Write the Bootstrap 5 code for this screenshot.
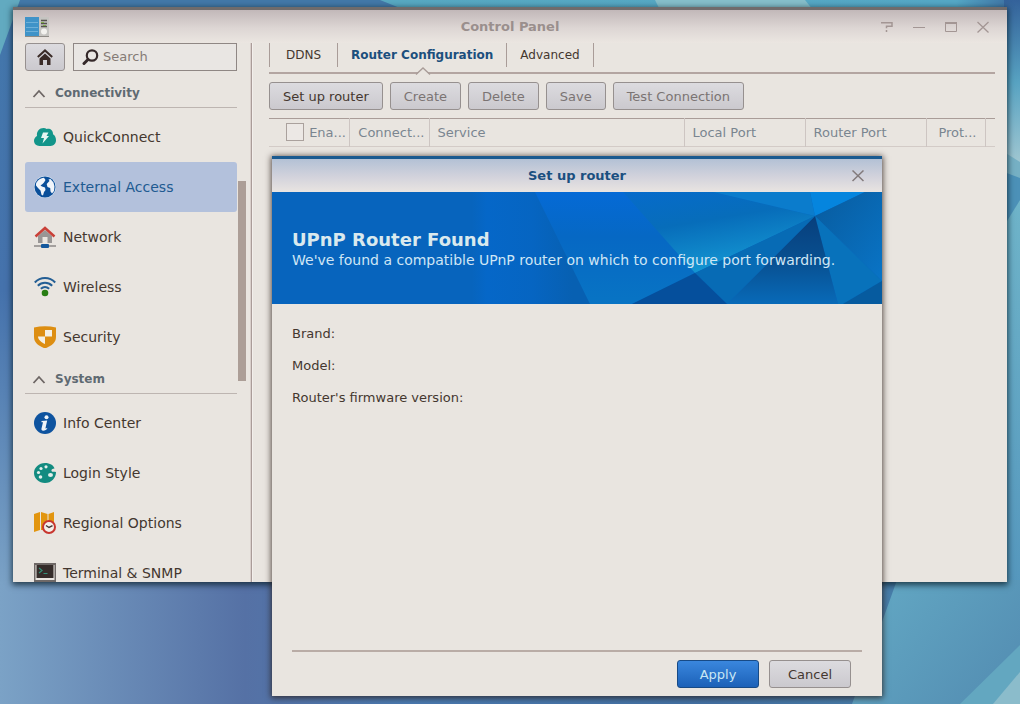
<!DOCTYPE html>
<html lang="en">
<head>
<meta charset="utf-8">
<meta name="viewport" content="width=device-width, initial-scale=1">
<title>Control Panel</title>
<link href="https://cdn.jsdelivr.net/npm/bootstrap@5.3.0/dist/css/bootstrap.min.css" rel="stylesheet">
<style>
  :root { --line: #a99c98; --ink: #44372f; --panel: #e9e5e0; }
  body { font-family: "DejaVu Sans", sans-serif; font-size: 13px; line-height: 20px; color: var(--ink); }
  .desktop { min-height: 100vh; background: #5583b3; }
  .wallpaper, .banner-art { inset: 0; width: 100%; height: 100%; }
  .win { background: var(--panel); box-shadow: 0 2px 6px 1px rgba(10, 30, 40, .75); }
  .main-win { height: calc(100vh - 129px); margin: 7px 13px 0; border-top: 3px solid #706b6b; }
  .main-title { height: 34px; padding: 0 12px; background: linear-gradient(#c2b8b9, #ddd6d4 55%, #ebe6e1); }
  .title-text { padding-left: 92px; color: #9a8f8d; font-weight: 700; }
  .win-tool { width: 16px; height: 16px; padding: 0; border: 0; background: none; display: flex; color: #a39694; }
  .win-tool svg { margin: auto; }
  .side { width: 225px; flex: none; margin-left: 12px; }
  .side-inner { width: 212px; }
  .side-tools { margin-bottom: 5px; }
  .divider { width: 3px; flex: none; border-left: 1px solid #d9cfcb; background: #aa9c99; border-right: 1px solid #f3efec; }
  .sys-btn { height: 28px; padding: 1px 13px 0; border: 1px solid #96908f; border-radius: 3px; background: linear-gradient(#dcdbdf, #cbc9ce); color: var(--ink); font-size: 13px; line-height: 20px; }
  .sys-btn:disabled { color: #7b7473; }
  .home-btn { width: 40px; padding: 0; flex: none; }
  .toolbar { gap: 7px; }
  .search-box { height: 28px; border: 1px solid #8f8784; background: #e9e6e3; }
  .search-box input { background: none; border: 0; outline: 0; min-width: 0; color: #6f6764; }
  .search-box input::placeholder { color: #857b76; opacity: 1; }
  .group-btn { width: 100%; height: 32px; padding: 3px 0 0 7px; border: 0; border-bottom: 1px solid #bdb5b1; background: none; color: #5f6a72; font-size: 12px; font-weight: 700; text-align: left; margin-bottom: 4px; }
  .side-link { height: 50px; padding-left: 9px; gap: 7px; border-radius: 3px; color: var(--ink); font-size: 14px; text-decoration: none; }
  .side-link svg { flex: none; }
  .side-link.active { background: #b3c1dc; color: #205a91; }
  .thumb { left: 225px; top: 138px; width: 8px; height: 200px; background: #ac9e97; }
  .content { padding: 0 12px 0 16px; min-width: 0; }
  .tab-row { height: 31px; border-bottom: 2px solid #b3a5a1; }
  .tab-row a { height: 24px; padding: 0 16px; border-right: 1px solid var(--line); color: var(--ink); font-size: 12px; line-height: 24px; text-decoration: none; }
  .tab-row li:first-child a { border-left: 1px solid var(--line); }
  .tab-row a.active { color: #1b4f7d; font-weight: 700; }
  .tab-row a.active, .tab-row li:last-child a { padding: 0 13px; }
  .tab-caret { left: 50%; top: 23px; margin-left: -8px; }
  .port-table { width: 100%; table-layout: fixed; border-top: 1px solid var(--line); border-bottom: 1px solid #d3cbc7; color: #7a8590; }
  .port-table th { height: 27px; padding: 1px 8px 0; font-weight: 400; border-right: 1px solid #cdc5c2; white-space: nowrap; overflow: hidden; line-height: 26px; }
  .port-table th.spare { border: 0; padding: 0; }
  .tick { appearance: none; width: 18px; height: 18px; border: 1px solid #aaa19d; background: #ece8e5; margin: 0 1px 0 9px; vertical-align: -4px; }
  .dialog-win { left: 272px; right: 138px; top: 156px; bottom: 8px; border-top: 3px solid #1a5a90; box-shadow: 0 1px 6px 1px rgba(40, 25, 20, .75); }
  .dialog-title { height: 33px; background: linear-gradient(#b3c1d5, #d3d3dc 55%, #e9e4e1); color: #1b4f80; font-weight: 700; }
  .dialog-close { right: 16px; color: #827a7b; }
  .banner { height: 112px; padding: 0 20px; background: #0764bd; color: #cfe6f5; }
  .banner h1 { font-size: 18px; line-height: 20px; font-weight: 700; margin: 38px 0 0; color: #d9e9ee; }
  .banner p { font-size: 14px; line-height: 20px; margin: 0; white-space: nowrap; }
  .field-list { padding: 20px; gap: 12px; }
  .dialog-foot { margin: 0 20px; height: 46px; padding: 8px 11px 0; gap: 10px; border-top: 2px solid #b9aca6; }
  .foot-btn { width: 82px; }
  .sys-btn.apply { color: #c9e6f3; background: linear-gradient(#3a87de, #1c61b8); border-color: #174a86; }
</style>
</head>
<body>
<div class="desktop position-relative overflow-hidden">
  <svg class="wallpaper position-absolute" viewBox="0 0 1020 704" preserveAspectRatio="none" aria-hidden="true">
    <defs>
      <linearGradient id="wa" x1="0" y1="0" x2="1" y2="0"><stop offset="0" stop-color="#7ba2c6"/><stop offset=".24" stop-color="#5571a5"/><stop offset=".4" stop-color="#4a7ab0"/><stop offset=".7" stop-color="#4271a3"/><stop offset="1" stop-color="#4b86ad"/></linearGradient>
      <linearGradient id="wb" x1="0" y1="0" x2="0" y2="1"><stop offset="0" stop-color="#4377ab"/><stop offset=".5" stop-color="#4572ac"/><stop offset="1" stop-color="#7aa1c5"/></linearGradient>
      <linearGradient id="wc" x1="0" y1="0" x2="1" y2="0"><stop offset="0" stop-color="#58a9c2"/><stop offset=".9" stop-color="#55a8c6"/><stop offset="1" stop-color="#3a699e"/></linearGradient>
      <linearGradient id="wd" x1="0" y1="0" x2="0" y2="1"><stop offset="0" stop-color="#34629a"/><stop offset=".5" stop-color="#58a3c2"/><stop offset="1" stop-color="#a2c8d2"/></linearGradient>
      <linearGradient id="we" x1="0" y1="0" x2="1" y2=".6"><stop offset="0" stop-color="#64aac5"/><stop offset="1" stop-color="#5590b4"/></linearGradient>
      <linearGradient id="wf" x1="0" y1="0" x2="0" y2="1"><stop offset="0" stop-color="#6fb4c9"/><stop offset="1" stop-color="#5496bd"/></linearGradient>
    </defs>
    <path fill="url(#wa)" d="M0 0h1020v704H0z"/>
    <path fill="url(#wb)" d="M0 0h13v582H0z"/>
    <path fill="#4379a9" d="M13 0h400v10H13z"/>
    <path fill="#62aac0" d="M0 0h20L0 55z"/>
    <path fill="url(#wc)" d="M380 0h640v10H405z"/>
    <path fill="#86bfca" d="M655 0h150l8 10H660z"/>
    <path fill="url(#wd)" d="M1004 0h16v165h-16z"/>
    <path fill="#76b0c4" d="M1004 152l16 10v18h-16z"/>
    <path fill="#4c91b8" d="M1004 172l16 6v22l-16 28z"/>
    <path fill="url(#wf)" d="M1004 226l16-26v400h-16z"/>
    <path fill="url(#we)" d="M852 704l30-82 15-42h123v124z"/>
    <path fill="#63a7c0" d="M960 704l60-59v59z"/>
    <path fill="#8bbccb" d="M993 704l27-32v32z"/>
  </svg>

  <div class="win main-win position-relative d-flex flex-column">
    <header class="main-title d-flex align-items-center position-relative">
      <svg width="24" height="20" viewBox="0 0 24 20" aria-hidden="true"><path fill="#3f93c8" d="M0 0h14v19H0z"/><path stroke="#83bde0" stroke-width=".7" d="M1 5.500h12M1 10.500h12M1 14.500h12"/><path fill="#c5c4c1" d="M14 0h10v19H14z"/><path fill="#8e8b86" d="M0 19h24v1H0z"/><path stroke="#55524e" stroke-width="1.300" d="M16 3.500h6M16 6.500h6M16 9.500h6"/><path fill="#7eaa48" d="M16 5h3v1h-3zM18 8h3v1h-3z"/><circle cx="19" cy="14.500" r="3" fill="#f2f1ee"/></svg>
      <span class="title-text flex-fill text-center">Control Panel</span>
      <div class="d-flex gap-3 pe-1">
        <button class="win-tool" type="button" aria-label="Help"><svg width="12" height="12" fill="none" stroke="currentColor" stroke-width="1.500"><path d="M0 1.700h11v3.600H5.500v2M5.500 9v2"/></svg></button>
        <button class="win-tool" type="button" aria-label="Minimize"><svg width="12" height="12" stroke="currentColor"><path d="M0 6.500h12"/></svg></button>
        <button class="win-tool" type="button" aria-label="Maximize"><svg width="12" height="12" fill="none" stroke="currentColor"><path d="M.5 1.500h11v9H.5z"/><path stroke-width="2" d="M0 2h12"/></svg></button>
        <button class="win-tool" type="button" aria-label="Close"><svg width="12" height="12" stroke="currentColor" stroke-width="1.300"><path d="M.5 1l11 10.500M11.500 1L.5 11.500"/></svg></button>
      </div>
    </header>

    <div class="d-flex flex-fill overflow-hidden position-relative">
      <nav class="side overflow-hidden" aria-label="Settings">
        <div class="side-inner">
          <div class="side-tools d-flex gap-2">
            <button class="sys-btn home-btn" type="button" aria-label="Home"><svg width="16" height="17" viewBox="0 0 16 17" aria-hidden="true"><path fill="none" stroke="#3a2b27" stroke-width="2" d="M.8 8L8 1.400 15.200 8"/><path fill="#3a2b27" d="M2.500 9.500L8 4.500l5.500 5V16H10v-5H6v5H2.500z"/></svg></button>
            <label class="search-box d-flex align-items-center flex-fill ps-2">
              <svg class="flex-shrink-0" width="17" height="17" viewBox="0 0 17 17" aria-hidden="true"><circle cx="10" cy="6.500" r="5.200" fill="none" stroke="#35292a" stroke-width="2.200"/><path stroke="#35292a" stroke-width="3" stroke-linecap="round" d="M6 10.500L2 14.500"/></svg>
              <input class="w-100 p-0 ms-1" type="text" placeholder="Search" aria-label="Search">
            </label>
          </div>

          <button class="group-btn d-flex align-items-center gap-2" type="button"><svg width="15" height="9" fill="none" stroke="#6d6664" stroke-width="1.800" aria-hidden="true"><path d="M1.500 8L7 2l5.500 6"/></svg>Connectivity</button>
          <a class="side-link d-flex align-items-center" href="#"><svg width="22" height="22" viewBox="0 0 22 22"><path fill="#12958a" d="M5.500 20C2.300 20 0 17.700 0 14.800c0-2.300 1.400-4.100 3-4.900C2.300 5.500 5.500 2 9.500 2c1.300 0 2.300.3 3.200 1 3.200-.8 6.600 1.300 6.300 5.300 2 1.200 3 3.500 3 6 0 3.300-2.300 5.700-5.500 5.700z"/><path fill="#e6f6f2" d="M9 6.500h5.500L12.500 10H15l-6.500 7.500 1.500-5.500H7z"/></svg>QuickConnect</a>
          <a class="side-link active d-flex align-items-center" href="#" aria-current="page"><svg width="22" height="22" viewBox="0 0 22 22"><circle cx="11" cy="11" r="11" fill="#d5e1f0"/><circle cx="11" cy="11" r="10.500" fill="#0a4f9a"/><path fill="#f1f5fa" d="M4 4.500C6 2.500 8 2 10 1.800L11.500 4 10 6.500 8.500 8 6.500 9.500 8 10.500l3 1 .5 2.500-1.500 2-1 3.500-1.500-.8-1-4.200L4 12 2 9.500C1.800 7.500 2.500 6 4 4.500zM14.500 3.500l2-.5 3 3.500 1 4-.5 4.500-2 2.500-1.500-2-.3-3.500-2.700-1-.8-3L14.500 6l1-1z"/></svg>External Access</a>
          <a class="side-link d-flex align-items-center" href="#"><svg width="22" height="22" viewBox="0 0 22 22"><path fill="#999695" d="M4 10l7-6 7 6v7H4z"/><path fill="#ebe6e1" d="M8.500 11h5v6h-5z"/><path fill="none" stroke="#c94038" stroke-width="2.500" d="M1.500 10.500L11 2l9.500 8.500"/><path stroke="#8d8989" stroke-width="1.500" d="M0 20h22"/><rect x="7" y="18" width="8" height="4" rx="1" fill="#14589d"/></svg>Network</a>
          <a class="side-link d-flex align-items-center" href="#"><svg width="22" height="22" viewBox="0 0 22 22" fill="none" stroke="#235e94" stroke-width="2"><path d="M.8 6.500C6.500.5 15.500.5 21.200 6.500M3.800 9.700c4.200-4 10.200-4 14.400 0M6.800 12.800c2.600-2.300 5.800-2.300 8.400 0"/><circle cx="11" cy="17" r="3.300" fill="#287d13" stroke="none"/></svg>Wireless</a>
          <a class="side-link d-flex align-items-center" href="#"><svg width="22" height="22" viewBox="0 0 22 22"><path fill="#dd8e12" d="M0 1.500C7-.2 15-.2 22 1.500V11c0 6-5 9-11 11.500C5 20 0 17 0 11z"/><path fill="#f4efe4" d="M11 4h7v6.500h-7zM4 10.500h7V18c-3-1.300-7-4-7-7.500z"/></svg>Security</a>

          <button class="group-btn d-flex align-items-center gap-2" type="button"><svg width="15" height="9" fill="none" stroke="#6d6664" stroke-width="1.800" aria-hidden="true"><path d="M1.500 8L7 2l5.500 6"/></svg>System</button>
          <a class="side-link d-flex align-items-center" href="#"><svg width="22" height="22" viewBox="0 0 22 22"><circle cx="11" cy="11" r="11" fill="#0e539f"/><circle cx="12.500" cy="5.300" r="2" fill="#eef3f8"/><path fill="#eef3f8" d="M7.500 9l5.700-.5-1.700 7.500c0 .8.800.6 2-.3-.8 2.300-2.500 3-4.300 3-1.500 0-2-1-1.700-2.200L9 10.200H7.500z"/></svg>Info Center</a>
          <a class="side-link d-flex align-items-center" href="#"><svg width="22" height="22" viewBox="0 0 22 22"><path fill="#128b80" d="M11 1c5 0 8.500 2.300 9.500 5.500-2 0-3.500 1-3 2.500.5 1.300 3 .5 4.500 1 0 6-4.500 11-11 11C5 21 0 16.500 0 11S5 1 11 1z"/><g fill="#e4efeb"><circle cx="12" cy="4.800" r="1.600"/><circle cx="7" cy="6.500" r="1.600"/><circle cx="4.500" cy="10.500" r="1.600"/><circle cx="6.500" cy="15" r="1.800"/><ellipse cx="16.500" cy="13" rx="2.500" ry="2"/></g></svg>Login Style</a>
          <a class="side-link d-flex align-items-center" href="#"><svg width="22" height="22" viewBox="0 0 22 22"><path fill="#e2950f" d="M0 2l6-2v18l-6 2zM7 0l6.500 2v16L7 18zM14.500 2L20 0v18h-5.500z"/><circle cx="15" cy="15" r="6" fill="#f3eeea" stroke="#c8362f" stroke-width="2"/><path fill="none" stroke="#443634" stroke-width="1.500" d="M12 13.500l3 2 3.500-1.800"/></svg>Regional Options</a>
          <a class="side-link d-flex align-items-center" href="#"><svg width="22" height="22" viewBox="0 0 22 22"><path fill="#6e6866" d="M0 1h22v19H0z"/><path fill="#e9e5e0" d="M1.500 3h19v15h-19z"/><path fill="#352c2a" d="M2.500 3h17v13h-17z"/><path fill="none" stroke="#358f78" stroke-width="1.200" d="M5 6l3 2.500L5 11M9.500 11.500h4"/></svg>Terminal &amp; SNMP</a>
        </div>
      </nav>
      <div class="thumb position-absolute"></div>
      <div class="divider"></div>

      <main class="content flex-fill">
        <ul class="tab-row list-unstyled d-flex mb-2">
          <li><a class="d-block" href="#">DDNS</a></li>
          <li class="position-relative"><a class="d-block active" href="#" aria-current="page">Router Configuration</a>
            <svg class="tab-caret position-absolute" width="16" height="9" aria-hidden="true"><path fill="#e9e5e0" d="M1 9L8 2l7 7z"/><path fill="none" stroke="#a99c98" stroke-width="1.300" d="M1 8.500L8 2l7 6.500"/></svg></li>
          <li><a class="d-block" href="#">Advanced</a></li>
        </ul>
        <div class="toolbar d-flex mb-2">
          <button class="sys-btn" type="button">Set up router</button>
          <button class="sys-btn" type="button" disabled>Create</button>
          <button class="sys-btn" type="button" disabled>Delete</button>
          <button class="sys-btn" type="button" disabled>Save</button>
          <button class="sys-btn" type="button" disabled>Test Connection</button>
        </div>
        <table class="port-table">
          <colgroup><col style="width:80px"><col style="width:80px"><col><col style="width:121px"><col style="width:121px"><col style="width:59px"><col style="width:10px"></colgroup>
          <thead><tr>
            <th class="pe-0"><input class="tick" type="checkbox" id="all"> <label for="all">Ena...</label></th>
            <th class="text-end pe-1">Connect...</th><th>Service</th><th>Local Port</th><th>Router Port</th><th class="text-end">Prot...</th><th class="spare"></th>
          </tr></thead>
        </table>
      </main>
    </div>
  </div>

  <section class="win dialog-win position-absolute d-flex flex-column" role="dialog" aria-labelledby="dlg">
    <header class="dialog-title d-flex align-items-center justify-content-center position-relative flex-shrink-0">
      <span id="dlg">Set up router</span>
      <button class="win-tool dialog-close position-absolute" type="button" aria-label="Close"><svg width="12" height="12" stroke="currentColor" stroke-width="1.500"><path d="M.5 .5l11 10.500M11.500 .5L.5 11"/></svg></button>
    </header>
    <div class="banner position-relative overflow-hidden flex-shrink-0">
      <svg class="banner-art position-absolute" viewBox="0 0 610 112" preserveAspectRatio="none" aria-hidden="true">
        <defs>
          <linearGradient id="ba" gradientUnits="userSpaceOnUse" x1="200" y1="0" x2="300" y2="0"><stop offset="0" stop-color="#0764bd"/><stop offset=".15" stop-color="#0567c8"/><stop offset=".6" stop-color="#0665c2"/><stop offset="1" stop-color="#0760b2"/></linearGradient>
          <linearGradient id="bb" x1="0" y1="0" x2="0" y2="1"><stop offset="0" stop-color="#056ad6"/><stop offset=".4" stop-color="#0668c4"/><stop offset="1" stop-color="#0874c4"/></linearGradient>
          <linearGradient id="bc" x1="0" y1="0" x2=".4" y2="1"><stop offset="0" stop-color="#066bcb"/><stop offset=".45" stop-color="#076dba"/><stop offset="1" stop-color="#1496d2"/></linearGradient>
          <linearGradient id="bd" x1="0" y1="0" x2="0" y2="1"><stop offset="0" stop-color="#083f7c"/><stop offset=".5" stop-color="#084f90"/><stop offset="1" stop-color="#086ab8"/></linearGradient>
          <linearGradient id="be" x1="0" y1="0" x2="1" y2="1"><stop offset="0" stop-color="#085b9e"/><stop offset="1" stop-color="#0974c6"/></linearGradient>
        </defs>
        <path fill="url(#ba)" d="M200 0h70l50 112H200z"/>
        <path fill="url(#bb)" d="M263 0h100l60 81-63 31h-42z"/>
        <path fill="url(#bc)" d="M351 0h90l102 24-120 57z"/>
        <path fill="#0b7ccc" d="M441 0h97l5 24z"/>
        <path fill="#0585de" d="M538 0h55l-50 24z"/>
        <path fill="url(#be)" d="M593 0h17v89l-67-65z"/>
        <path fill="#0872bb" d="M543 24l67 65-39 23h-5z"/>
        <path fill="#065b9f" d="M571 112l39-23v23z"/>
        <path fill="url(#bd)" d="M543 24l23 88H455z"/>
        <path fill="#076bb5" d="M543 24L423 81l32 31z"/>
        <path fill="#054f9c" d="M423 81l-63 31h95z"/>
      </svg>
      <div class="position-relative overflow-hidden"><h1>UPnP Router Found</h1><p>We've found a compatible UPnP router on which to configure port forwarding.</p></div>
    </div>
    <div class="field-list d-flex flex-column flex-fill">
      <div>Brand:</div><div>Model:</div><div>Router's firmware version:</div>
    </div>
    <footer class="dialog-foot d-flex justify-content-end">
      <button class="sys-btn apply foot-btn" type="button">Apply</button>
      <button class="sys-btn foot-btn" type="button">Cancel</button>
    </footer>
  </section>
</div>
<script src="https://cdn.jsdelivr.net/npm/bootstrap@5.3.0/dist/js/bootstrap.bundle.min.js"></script>
</body>
</html>
